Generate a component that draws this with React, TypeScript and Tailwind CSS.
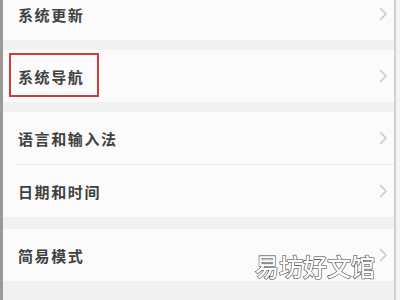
import React from "react";

function Chevron() {
  return (
    <svg width="9" height="14" viewBox="0 0 9 14" className="shrink-0">
      <path d="M1.5 1.5 L7 7 L1.5 12.5" fill="none" stroke="#c9c9c9" strokeWidth="1.6" strokeLinecap="round" strokeLinejoin="round" />
    </svg>
  );
}

function Row({ label }: { label: string }) {
  return (
    <div className="h-[52px] flex items-center justify-between pl-[15px] pr-[6px] bg-[#fbfbfb]">
      <span className="text-[15px] font-bold text-[#404040] tracking-[1.6px] leading-none">{label}</span>
      <Chevron />
    </div>
  );
}

export default function App() {
  return (
    <div
      className="relative w-[400px] h-[300px] overflow-hidden bg-[#f1f1f1] border-l-[3px] border-l-[#9a9a9a]"
      style={{ fontFamily: '"Noto Sans CJK SC", "Noto Sans", sans-serif' }}
    >
      <div className="flex w-full h-full">
        <div className="flex-1 flex flex-col -mt-[12px]">
          <Row label="系统更新" />
          <div className="h-[10px] shrink-0" />
          <div className="relative">
            <Row label="系统导航" />
            <div className="absolute left-[6px] top-[3px] w-[90px] h-[44px] border-2 border-[#d33a3d]" />
          </div>
          <div className="h-[10px] shrink-0" />
          <Row label="语言和输入法" />
          <div className="h-px bg-[#fbfbfb] shrink-0">
            <div className="ml-[13px] h-px bg-[#ececec]" />
          </div>
          <Row label="日期和时间" />
          <div className="h-[12px] shrink-0" />
          <Row label="简易模式" />
        </div>
        <div className="w-[6px] flex">
          <div className="w-[2px] bg-[#d0d0d0]" />
          <div className="flex-1 bg-[#f4f4f4]" />
        </div>
      </div>
      <div className="absolute left-[252px] top-[254px] text-[24px] leading-none text-white font-medium [-webkit-text-stroke:1.2px_#444] [paint-order:stroke_fill]">
        易坊好文馆
      </div>
    </div>
  );
}
